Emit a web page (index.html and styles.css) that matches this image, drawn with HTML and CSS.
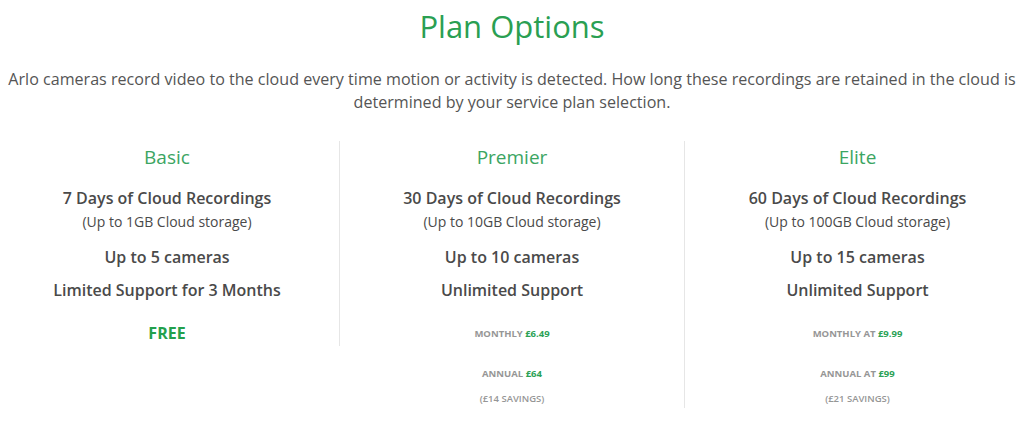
FILE: index.html
```html
<!DOCTYPE html>
<html lang="en">
<head>
<meta charset="utf-8">
<title>Plan Options</title>
<link rel="stylesheet" href="styles.css">
</head>
<body>
<main class="page">
  <h1 class="title">Plan Options</h1>
  <p class="intro">Arlo cameras record video to the cloud every time motion or activity is detected. How long these recordings are retained in the cloud is determined by your service plan selection.</p>
  <div class="plans">
    <section class="plan plan-divider">
      <h2 class="plan-name">Basic</h2>
      <p class="days">7 Days of Cloud Recordings</p>
      <p class="storage">(Up to 1GB Cloud storage)</p>
      <p class="feature cameras">Up to 5 cameras</p>
      <p class="feature support">Limited Support for 3 Months</p>
      <p class="free">FREE</p>
    </section>
    <section class="plan plan-divider">
      <h2 class="plan-name">Premier</h2>
      <p class="days">30 Days of Cloud Recordings</p>
      <p class="storage">(Up to 10GB Cloud storage)</p>
      <p class="feature cameras">Up to 10 cameras</p>
      <p class="feature support">Unlimited Support</p>
      <p class="price monthly">MONTHLY <span class="amount">£6.49</span></p>
      <p class="price annual">ANNUAL <span class="amount">£64</span></p>
      <p class="price savings">(£14 SAVINGS)</p>
    </section>
    <section class="plan">
      <h2 class="plan-name">Elite</h2>
      <p class="days">60 Days of Cloud Recordings</p>
      <p class="storage">(Up to 100GB Cloud storage)</p>
      <p class="feature cameras">Up to 15 cameras</p>
      <p class="feature support">Unlimited Support</p>
      <p class="price monthly">MONTHLY AT <span class="amount">£9.99</span></p>
      <p class="price annual">ANNUAL AT <span class="amount">£99</span></p>
      <p class="price savings">(£21 SAVINGS)</p>
    </section>
  </div>
</main>
</body>
</html>
```
FILE: styles.css
```css
html, body {
  margin: 0;
  padding: 0;
  background: #ffffff;
  overflow: hidden;
}
body {
  font-family: "Open Sans", "Liberation Sans", sans-serif;
  color: #4a4a4a;
}
.page {
  width: 1024px;
}
.title {
  margin: 6px 0 0;
  font-size: 31px;
  line-height: 40px;
  font-weight: 400;
  color: #2a9f52;
  text-align: center;
}
.intro {
  margin: 22px 2px 0;
  font-size: 16.1px;
  line-height: 23px;
  color: #555555;
  text-align: center;
}
.plans {
  display: grid;
  grid-template-columns: 345px 345px 345px;
  align-items: start;
  margin: 27px 0 0 -5px;
  width: 1035px;
}
.plan {
  text-align: center;
  padding-top: 4px;
}
.plan-divider {
  border-right: 1px solid #e6e6e6;
  padding-bottom: 2px;
}
.plan p {
  margin: 0;
}
.plan-name {
  margin: 0;
  font-size: 19px;
  line-height: 24px;
  font-weight: 400;
  color: #3ba562;
}
.days {
  margin-top: 18px !important;
  font-size: 16px;
  line-height: 22px;
  font-weight: 600;
  color: #4a4a4a;
}
.storage {
  margin-top: 3px !important;
  font-size: 14px;
  line-height: 20px;
  color: #4a4a4a;
}
.feature {
  font-size: 16px;
  line-height: 22px;
  font-weight: 600;
  color: #4a4a4a;
}
.cameras {
  margin-top: 14px !important;
}
.support {
  margin-top: 11px !important;
}
.free {
  margin-top: 21px !important;
  font-size: 16px;
  line-height: 22px;
  font-weight: 700;
  color: #23a04c;
}
.price {
  font-size: 9.5px;
  line-height: 14px;
  font-weight: 700;
  color: #969696;
}
.amount {
  color: #2ba256;
}
.monthly {
  margin-top: 26px !important;
}
.annual {
  margin-top: 26px !important;
}
.savings {
  margin-top: 11px !important;
  font-weight: 600;
}
```
